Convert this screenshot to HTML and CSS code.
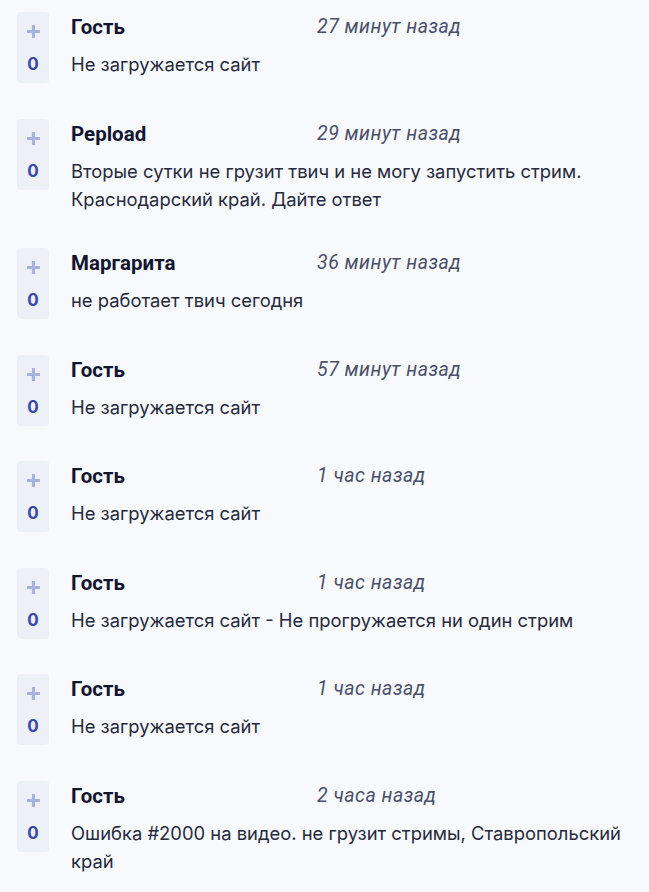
FILE: index.html
```html
<!DOCTYPE html>
<html lang="ru">
<head>
<meta charset="utf-8">
<link rel="stylesheet" href="styles.css">
</head>
<body>
<div class="list">
  <div class="item">
    <div class="vote"><svg class="plus" viewBox="0 0 15 15"><path d="M7.5 1v13M1 7.5h13"/></svg><span class="count">0</span></div>
    <div class="body">
      <div class="head"><span class="name">Гость</span><span class="time">27 минут назад</span></div>
      <div class="text">Не загружается сайт</div>
    </div>
  </div>
  <div class="item">
    <div class="vote"><svg class="plus" viewBox="0 0 15 15"><path d="M7.5 1v13M1 7.5h13"/></svg><span class="count">0</span></div>
    <div class="body">
      <div class="head"><span class="name">Pepload</span><span class="time">29 минут назад</span></div>
      <div class="text">Вторые сутки не грузит твич и не могу запустить стрим. Краснодарский край. Дайте ответ</div>
    </div>
  </div>
  <div class="item">
    <div class="vote"><svg class="plus" viewBox="0 0 15 15"><path d="M7.5 1v13M1 7.5h13"/></svg><span class="count">0</span></div>
    <div class="body">
      <div class="head"><span class="name">Маргарита</span><span class="time">36 минут назад</span></div>
      <div class="text">не работает твич сегодня</div>
    </div>
  </div>
  <div class="item">
    <div class="vote"><svg class="plus" viewBox="0 0 15 15"><path d="M7.5 1v13M1 7.5h13"/></svg><span class="count">0</span></div>
    <div class="body">
      <div class="head"><span class="name">Гость</span><span class="time">57 минут назад</span></div>
      <div class="text">Не загружается сайт</div>
    </div>
  </div>
  <div class="item">
    <div class="vote"><svg class="plus" viewBox="0 0 15 15"><path d="M7.5 1v13M1 7.5h13"/></svg><span class="count">0</span></div>
    <div class="body">
      <div class="head"><span class="name">Гость</span><span class="time">1 час назад</span></div>
      <div class="text">Не загружается сайт</div>
    </div>
  </div>
  <div class="item">
    <div class="vote"><svg class="plus" viewBox="0 0 15 15"><path d="M7.5 1v13M1 7.5h13"/></svg><span class="count">0</span></div>
    <div class="body">
      <div class="head"><span class="name">Гость</span><span class="time">1 час назад</span></div>
      <div class="text">Не загружается сайт - Не прогружается ни один стрим</div>
    </div>
  </div>
  <div class="item">
    <div class="vote"><svg class="plus" viewBox="0 0 15 15"><path d="M7.5 1v13M1 7.5h13"/></svg><span class="count">0</span></div>
    <div class="body">
      <div class="head"><span class="name">Гость</span><span class="time">1 час назад</span></div>
      <div class="text">Не загружается сайт</div>
    </div>
  </div>
  <div class="item">
    <div class="vote"><svg class="plus" viewBox="0 0 15 15"><path d="M7.5 1v13M1 7.5h13"/></svg><span class="count">0</span></div>
    <div class="body">
      <div class="head"><span class="name">Гость</span><span class="time">2 часа назад</span></div>
      <div class="text">Ошибка #2000 на видео. не грузит стримы, Ставропольский край</div>
    </div>
  </div>
</div>
</body>
</html>
```
FILE: styles.css
```css
html, body {
  margin: 0;
  padding: 0;
  background: #f8f9fc;
}
body {
  font-family: Inter, "Noto Sans", sans-serif;
  color: #1c2033;
}
.list {
  padding: 12px 16px 0 17px;
}
.item {
  display: flex;
  align-items: flex-start;
  gap: 22px;
  margin-bottom: 35.5px;
}
.vote {
  flex: 0 0 32px;
  height: 71px;
  background: #eef0f8;
  border-radius: 4px;
  display: flex;
  flex-direction: column;
  align-items: center;
}
.plus {
  margin-top: 12px;
  width: 15px;
  height: 15px;
  fill: none;
  stroke: #a9b1dd;
  stroke-width: 3.2;
}
.count {
  margin-top: 14px;
  line-height: 22px;
  font-size: 17px;
  font-weight: 700;
  color: #3a48a6;
}
.body {
  flex: 1;
  min-width: 0;
}
.head {
  display: flex;
  height: 30px;
  line-height: 30px;
  margin-bottom: 8px;
}
.name {
  width: 246px;
  flex: 0 0 246px;
  font-family: Roboto, sans-serif;
  font-size: 20.5px;
  font-weight: 700;
  color: #121530;
}
.time {
  font-family: Roboto, sans-serif;
  font-style: italic;
  font-size: 19.5px;
  letter-spacing: 0.5px;
  color: #4a506a;
}
.text {
  font-size: 18.4px;
  line-height: 28px;
  color: #262a3c;
}
```
